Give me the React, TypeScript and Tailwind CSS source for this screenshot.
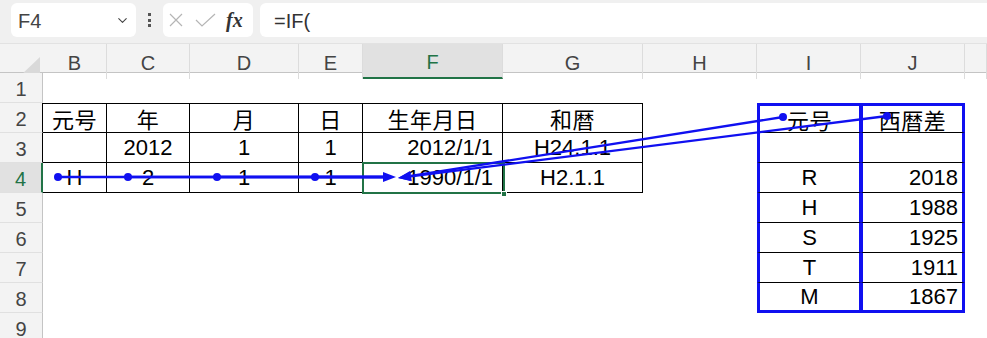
import { ChevronDown } from 'lucide-react'

const GRID = 'grid grid-cols-[43px_64px_83px_109px_64px_140px_140px_114px_104px_104px_1fr]'
const COLS = ['B', 'C', 'D', 'E', 'F', 'G', 'H', 'I', 'J', 'K']
const ROWS = [1, 2, 3, 4, 5, 6, 7, 8, 9]
const BLUE = '#1010f0'

type CellData = { t: string; a?: 'r'; cjk?: boolean }

const data: Record<string, CellData> = {
  B2: { t: '元号', cjk: true },
  C2: { t: '年', cjk: true },
  D2: { t: '月', cjk: true },
  E2: { t: '日', cjk: true },
  F2: { t: '生年月日', cjk: true },
  G2: { t: '和暦', cjk: true },
  C3: { t: '2012' },
  D3: { t: '1' },
  E3: { t: '1' },
  F3: { t: '2012/1/1', a: 'r' },
  G3: { t: 'H24.1.1' },
  B4: { t: 'H' },
  C4: { t: '2' },
  D4: { t: '1' },
  E4: { t: '1' },
  F4: { t: '1990/1/1', a: 'r' },
  G4: { t: 'H2.1.1' },
  I2: { t: '元号', cjk: true },
  J2: { t: '西暦差', cjk: true },
  I4: { t: 'R' },
  J4: { t: '2018', a: 'r' },
  I5: { t: 'H' },
  J5: { t: '1988', a: 'r' },
  I6: { t: 'S' },
  J6: { t: '1925', a: 'r' },
  I7: { t: 'T' },
  J7: { t: '1911', a: 'r' },
  I8: { t: 'M' },
  J8: { t: '1867', a: 'r' },
}

function borderFor(col: string, row: number) {
  if ('BCDEFG'.includes(col) && row >= 2 && row <= 4) {
    return 'border-r border-b border-black' + (row === 2 ? ' border-t' : '')
  }
  if ((col === 'I' || col === 'J') && row >= 2 && row <= 8) {
    let c =
      col === 'I'
        ? 'border-l-[3px] border-l-[#1010f0] border-r-2 border-r-[#1010f0]'
        : 'border-l-2 border-l-[#1010f0] border-r-[3px] border-r-[#1010f0]'
    if (row === 2) c += ' border-t-[3px] border-t-[#1010f0]'
    c += row === 8 ? ' border-b-[3px] border-b-[#1010f0]' : ' border-b border-b-black'
    return c
  }
  return ''
}

function Cell({ col, row }: { col: string; row: number }) {
  const d = data[col + row]
  const pad = d?.a === 'r' ? (col === 'J' ? 'justify-end pr-[4px]' : 'justify-end pr-[9px]') : 'justify-center'
  return (
    <div className={`h-[30px] flex items-center whitespace-nowrap overflow-hidden ${pad} ${borderFor(col, row)}`}>
      {d && (
        <span className={d.cjk ? 'text-[22px] leading-[24px] pt-[5px] tracking-[0.5px]' : 'text-[22px] leading-[24px] pt-[1px]'}>
          {d.t}
        </span>
      )}
    </div>
  )
}

function arrowHead(tx: number, ty: number, sx: number, sy: number, L = 13, w = 5) {
  const dx = sx - tx
  const dy = sy - ty
  const len = Math.hypot(dx, dy)
  const ux = dx / len
  const uy = dy / len
  const bx = tx + ux * L
  const by = ty + uy * L
  const px = -uy * w
  const py = ux * w
  return {
    base: [bx, by],
    points: `${tx},${ty} ${bx + px},${by + py} ${bx - px},${by - py}`,
  }
}

function Arrows() {
  const dotsRow = [58, 128, 217, 315]
  const h = arrowHead(396, 177, 58, 177)
  const a1 = arrowHead(398, 178, 783, 117)
  const a2 = arrowHead(398, 178, 887, 116)
  return (
    <svg className="absolute inset-0 pointer-events-none" width="987" height="338" viewBox="0 0 987 338">
      <g stroke={BLUE} strokeWidth="2.3" fill={BLUE}>
        {dotsRow.map((x) => (
          <line key={x} x1={x} y1={177} x2={h.base[0]} y2={177} />
        ))}
        {dotsRow.map((x) => (
          <circle key={'d' + x} cx={x} cy={177} r={4} stroke="none" />
        ))}
        <polygon points={h.points} stroke="none" />
        <line x1={783} y1={117} x2={a1.base[0]} y2={a1.base[1]} />
        <line x1={887} y1={116} x2={a2.base[0]} y2={a2.base[1]} />
        <circle cx={783} cy={117} r={4} stroke="none" />
        <circle cx={887} cy={116} r={4} stroke="none" />
        <polygon points={a1.points} stroke="none" />
        <polygon points={a2.points} stroke="none" />
      </g>
    </svg>
  )
}

function Toolbar() {
  return (
    <div className="h-[44px] bg-[#f0f0f0] border-b border-[#e2e2e2] flex items-start pt-[3px] pl-[11px] text-[#333]">
      <div className="w-[125px] h-[34px] bg-white rounded-[6px] flex items-center justify-between pl-[7px] pr-[6px]">
        <span className="text-[20px] pt-[2px] text-[#444]">F4</span>
        <ChevronDown size={15} strokeWidth={1.75} className="text-[#444]" />
      </div>
      <div className="w-[27px] h-[34px] flex flex-col items-center justify-center gap-[2.5px]">
        <span className="w-[3px] h-[3px] bg-[#555]" />
        <span className="w-[3px] h-[3px] bg-[#555]" />
        <span className="w-[3px] h-[3px] bg-[#555]" />
      </div>
      <div className="w-[90px] h-[34px] bg-white rounded-[6px] flex items-center pl-[5px] gap-[11px]">
        <svg width="16" height="16" viewBox="0 0 16 16">
          <path d="M2 2 L14 14 M14 2 L2 14" stroke="#b5b5b5" strokeWidth="1.2" fill="none" />
        </svg>
        <svg width="21" height="16" viewBox="0 0 21 16">
          <path d="M1 8 L7 14 L20 2" stroke="#b5b5b5" strokeWidth="1.2" fill="none" />
        </svg>
        <span className="font-['Liberation_Serif',serif] italic font-bold text-[20px] text-[#333] -ml-[1px]">fx</span>
      </div>
      <div className="flex-1 ml-[7px] h-[34px] bg-white rounded-l-[6px] flex items-center pl-[14px]">
        <span className="text-[20px] pt-[2px] text-[#333]">=IF(</span>
      </div>
    </div>
  )
}

export default function App() {
  return (
    <div className="relative w-[987px] h-[338px] overflow-hidden bg-white font-['Liberation_Sans','Noto_Sans_CJK_JP',sans-serif] text-black">
      <Toolbar />
      <div className={`${GRID} h-[29px] bg-[#f3f3f3] border-b border-[#c4c4c4]`}>
        <div className="flex items-end justify-end pr-[3px] pb-[3px]">
          <svg width="20" height="19" viewBox="0 0 20 19">
            <polygon points="20,0 20,19 0,19" fill="#d9d9d9" />
          </svg>
        </div>
        {COLS.map((c) => (
          <div
            key={c}
            className={`flex items-center justify-center pt-[3px] text-[20px] border-r border-r-[#dcdcdc] ${
              c === 'F' ? 'bg-[#e1e1e1] text-[#217346] border-b-2 border-b-[#217346]' : 'text-[#444]'
            }`}
          >
            {c === 'K' ? '' : c}
          </div>
        ))}
      </div>
      {ROWS.map((r) => (
        <div key={r} className={GRID}>
          <div
            className={`h-[30px] flex items-center justify-center text-[20px] leading-[24px] pt-[2px] ${
              r === 4
                ? 'bg-[#e1e1e1] text-[#217346] border-r-2 border-r-[#217346]'
                : r === 2 || r === 3
                ? 'bg-[#f3f3f3] text-[#444] border-r border-r-black'
                : 'bg-[#f3f3f3] text-[#444] border-r border-r-[#c4c4c4]'
            } border-b border-b-[#e0e0e0]`}
          >
            {r}
          </div>
          {COLS.map((c) => (
            <Cell key={c} col={c} row={r} />
          ))}
        </div>
      ))}
      {/* selected cell F4 */}
      <div className="absolute left-[362px] top-[162px] w-[143px] h-[32px] border-2 border-[#217346] pointer-events-none" />
      <div className="absolute left-[501px] top-[191px] w-[6px] h-[6px] bg-[#217346] border border-white pointer-events-none" />
      <Arrows />
    </div>
  )
}
